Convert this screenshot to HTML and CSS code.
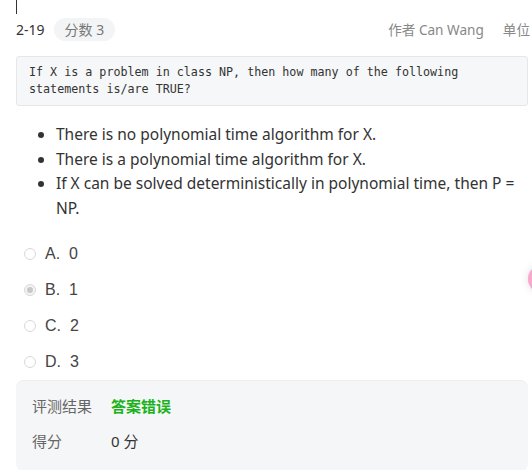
FILE: index.html
```html
<!DOCTYPE html>
<html>
<head>
<meta charset="utf-8">
<link rel="stylesheet" href="styles.css">
</head>
<body>
<div class="page">
  <div class="caret"></div>
  <div class="head">
    <div class="head-left">
      <span class="num">2-19</span>
      <span class="pill">分数 3</span>
    </div>
    <div class="head-right">
      <span>作者 Can Wang</span>
      <span>单位</span>
    </div>
  </div>
  <pre class="code">If X is a problem in class NP, then how many of the following
statements is/are TRUE?</pre>
  <ul class="stmts">
    <li>There is no polynomial time algorithm for X.</li>
    <li>There is a polynomial time algorithm for X.</li>
    <li>If X can be solved deterministically in polynomial time, then P = NP.</li>
  </ul>
  <div class="options">
    <label class="opt"><span class="radio"></span><span>A.&nbsp; 0</span></label>
    <label class="opt"><span class="radio checked"></span><span>B.&nbsp; 1</span></label>
    <label class="opt"><span class="radio"></span><span>C.&nbsp; 2</span></label>
    <label class="opt"><span class="radio"></span><span>D.&nbsp; 3</span></label>
  </div>
  <div class="result">
    <div class="row"><span class="k">评测结果</span><span class="v wrong">答案错误</span></div>
    <div class="row"><span class="k">得分</span><span class="v">0 分</span></div>
  </div>
</div>
<div class="float-ball"></div>
</body>
</html>
```
FILE: styles.css
```css
html, body { margin: 0; padding: 0; background: #fff; overflow: hidden; }
body { font-family: "Noto Sans", "Noto Sans CJK SC", sans-serif; color: #333; }
.page { padding: 0 4px 0 16px; width: 512px; }
.caret { width: 1px; height: 14px; background: #333; }
.head { display: flex; justify-content: space-between; align-items: center; height: 30px; white-space: nowrap; }
.head-left { display: flex; align-items: center; gap: 9px; }
.num { font-size: 14px; color: #333; }
.pill { background: #f3f4f6; color: #777; font-size: 14px; border-radius: 12px; padding: 2px 11px; line-height: 19px; }
.head-right { display: flex; gap: 19px; font-size: 13.6px; color: #888; margin-right: -2px; }
.code { margin: 12px 0 0; background: #f6f7f8; border: 1px solid #e6e7e9; border-radius: 3px; padding: 7px 12px; font-family: "DejaVu Sans Mono", monospace; font-size: 11.7px; line-height: 17px; color: #333; white-space: pre; }
.stmts { margin: 16px 0 0; padding-left: 40px; font-size: 15.5px; line-height: 24.5px; color: #333; }
.options { margin-top: 16px; display: flex; flex-direction: column; }
.opt { display: flex; align-items: center; gap: 9px; height: 36px; padding-left: 8px; font-family: "Liberation Sans", Arial, sans-serif; font-size: 16px; color: #444; }
.radio { width: 12px; height: 12px; border: 1px solid #d8d8d8; border-radius: 50%; background: #fff; box-sizing: border-box; display: inline-flex; align-items: center; justify-content: center; flex: none; }
.radio.checked { background: #f4f4f4; }
.radio.checked::after { content: ""; width: 6px; height: 6px; border-radius: 50%; background: #c8c8c8; }
.result { margin-top: 0; border-top: 1px solid #eee; background: #f5f6f8; border-radius: 8px; padding: 7px 16px 14px; }
.row { display: flex; align-items: center; height: 35px; font-size: 15px; color: #666; }
.k { width: 79px; }
.v { color: #333; }
.wrong { color: #19b319; font-weight: 600; }
.float-ball { position: absolute; left: 528px; top: 265px; width: 28px; height: 28px; border-radius: 50%; background: #f7a8cc; box-shadow: 0 0 8px rgba(0,0,0,0.12); }
```
